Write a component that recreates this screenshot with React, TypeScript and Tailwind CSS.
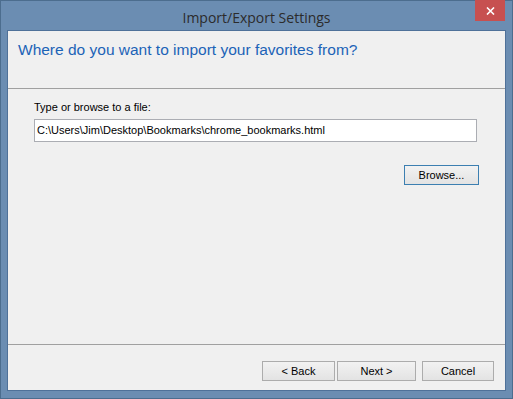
import React from "react";

function Button({ children, focused }: { children: React.ReactNode; focused?: boolean }) {
  return (
    <button
      className={
        "flex h-[20px] w-full items-center justify-center border bg-gradient-to-b from-[#f2f2f2] to-[#e3e3e3] text-[11px] text-black " +
        (focused ? "border-[#3c7fb1]" : "border-[#acacac]")
      }
    >
      {children}
    </button>
  );
}

export default function App() {
  return (
    <div
      className="flex h-[399px] w-[513px] flex-col border border-[#4c6d8e] bg-[#6b8db2]"
      style={{ fontFamily: '"Liberation Sans", Arial, sans-serif' }}
    >
      {/* title bar */}
      <div className="relative flex h-[29px] items-center justify-center">
        <span className="mt-[3px] text-[14px] text-[#2b2b2b]" style={{ fontFamily: '"Open Sans", sans-serif' }}>
          Import/Export Settings
        </span>
        <div className="absolute right-[7px] top-[-1px] flex h-[21px] w-[30px] items-center justify-center bg-[#c75050]">
          <svg width="9" height="8" viewBox="0 0 9 8">
            <path d="M1 0.5 L8 7.5 M8 0.5 L1 7.5" stroke="white" strokeWidth="1.6" />
          </svg>
        </div>
      </div>

      {/* client area */}
      <div className="ml-[6px] mr-[6px] flex h-[361px] flex-col border border-[#4f7199] bg-[#f0f0f0]">
        <div className="h-[58px] border-b border-[#a0a0a0] pl-[10px] pt-[9px]">
          <div className="text-[15.5px] leading-[20px] text-[#1c63b7]">
            Where do you want to import your favorites from?
          </div>
        </div>

        <div className="flex flex-1 flex-col pl-[26px] pr-[28px] pt-[12px]">
          <div className="text-[11px] leading-[13px] text-black">Type or browse to a file:</div>
          <div className="mt-[5px] flex h-[23px] items-center border border-[#abadb3] bg-white pl-[2px] text-[11px] text-black">
            C:\Users\Jim\Desktop\Bookmarks\chrome_bookmarks.html
          </div>
          <div className="mr-[-2px] mt-[23px] flex justify-end">
            <div className="w-[75px]">
              <Button focused>Browse...</Button>
            </div>
          </div>
        </div>

        <div className="flex h-[46px] items-start justify-end border-t border-[#a0a0a0] pr-[11px] pt-[16px]">
          <div className="w-[73px]">
            <Button>&lt; Back</Button>
          </div>
          <div className="ml-[2px] w-[79px]">
            <Button>Next &gt;</Button>
          </div>
          <div className="ml-[6px] w-[72px]">
            <Button>Cancel</Button>
          </div>
        </div>
      </div>
    </div>
  );
}
